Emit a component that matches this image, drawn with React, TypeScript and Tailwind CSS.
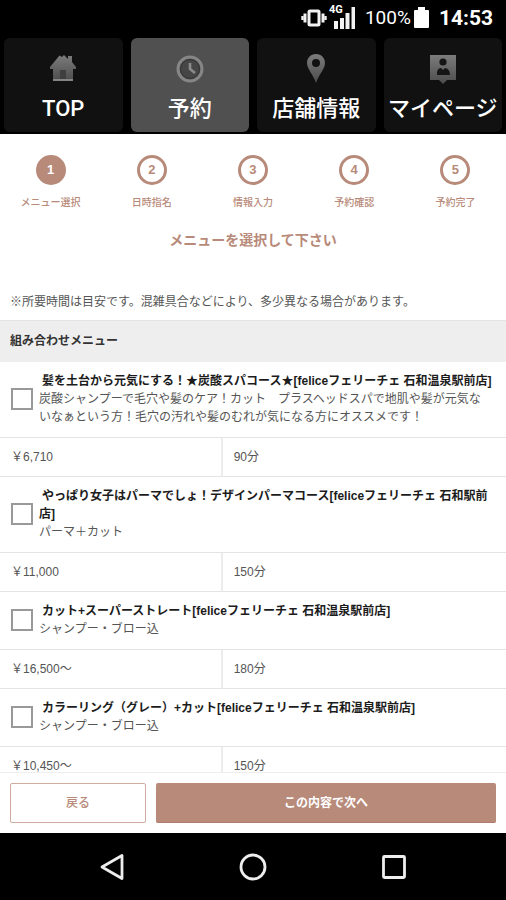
import { useState } from "react";
import type { ReactNode } from "react";

function VibrateIcon() {
  return (
    <svg viewBox="0 0 26 20" className="h-5 w-[26px]" aria-hidden="true">
      <rect x="8" y="3" width="10" height="14" rx="1" fill="none" stroke="#f2f2f2" strokeWidth="3" />
      <path d="M4 5.500v9M22 5.500v9" stroke="#f2f2f2" strokeWidth="3" />
      <path d="M1.500 8v4M24.500 8v4" stroke="#f2f2f2" strokeWidth="2.400" />
    </svg>
  );
}

function SignalIcon() {
  return (
    <svg viewBox="0 0 22 24" className="h-6 w-[22px]" aria-hidden="true">
      <path d="M1 23v-8h4v8zM7 23v-11h4v11zM12.500 23v-16h4v16zM18.500 23V1h3.500v22z" fill="#f2f2f2" />
    </svg>
  );
}

function BatteryIcon() {
  return (
    <svg viewBox="0 0 15 21" className="h-[21px] w-[15px]" aria-hidden="true">
      <path d="M4 0h7v3h3q1 0 1 1v16q0 1-1 1H1q-1 0-1-1V4q0-1 1-1h3z" fill="#fff" />
    </svg>
  );
}

function StatusBar() {
  return (
    <div className="flex h-[38px] flex-none items-center justify-end gap-[10px] pr-[13px] pb-[3px] text-white">
      <div className="flex items-center gap-[6px]">
        <VibrateIcon />
        <div className="relative">
          <SignalIcon />
          <span className="absolute -top-px -left-1 bg-black text-[11px] leading-[10px] font-bold">4G</span>
        </div>
      </div>
      <div className="flex items-center gap-[3px]">
        <span className="text-[19px] leading-6">100%</span>
        <BatteryIcon />
      </div>
      <span className="text-[21px] leading-6 font-bold">14:53</span>
    </div>
  );
}

function IconGradient({ id }: { id: string }) {
  return (
    <defs>
      <linearGradient id={id} x1="0" y1="0" x2="0" y2="1">
        <stop offset="0" stopColor="#7c7c7c" />
        <stop offset="1" stopColor="#4c4c4c" />
      </linearGradient>
    </defs>
  );
}

const homeIcon = (
  <svg viewBox="0 0 28 32" className="h-8 w-7" aria-hidden="true">
    <IconGradient id="home" />
    <path d="M1 15 10.500 3.500 13 5 15 3l4 4V4h4v6l4 5v2h-3v12H4V17H1z" fill="url(#home)" />
    <path d="M11 18h6v9h-6zM13 18h1v9h-1z" fill="#3f3f3f" />
    <path d="M4 28h20" stroke="#999" strokeWidth="1.500" />
  </svg>
);

const clockIcon = (
  <svg viewBox="0 0 28 32" className="h-8 w-7" aria-hidden="true">
    <circle cx="14" cy="17" r="12" fill="#505050" stroke="#868686" strokeWidth="3" />
    <circle cx="14" cy="17" r="9.500" fill="#464646" stroke="#333" />
    <path d="M14 11v6l5 4" fill="none" stroke="#8c8c8c" strokeWidth="2.600" />
  </svg>
);

const pinIcon = (
  <svg viewBox="0 0 28 32" className="h-8 w-7" aria-hidden="true">
    <IconGradient id="pin" />
    <path
      d="M14 2C8.500 2 5 6 5 11c0 6 6 11 9 20 3-9 9-14 9-20 0-5-3.500-9-9-9zm0 5a4 4 0 1 1 0 8 4 4 0 0 1 0-8z"
      fill="url(#pin)"
      fillRule="evenodd"
    />
  </svg>
);

const personIcon = (
  <svg viewBox="0 0 28 32" className="h-8 w-7" aria-hidden="true">
    <IconGradient id="person" />
    <path d="M1 3h26v25H18l-4 4-4-4H1z" fill="url(#person)" />
    <circle cx="14" cy="10" r="3.600" fill="#151515" />
    <path d="M8 23v-3q1-4 4-4l2 2 2-2q5 1 5 7z" fill="#151515" />
  </svg>
);

const tabs: { label: string; icon: ReactNode; active?: boolean }[] = [
  { label: "TOP", icon: homeIcon },
  { label: "予約", icon: clockIcon, active: true },
  { label: "店舗情報", icon: pinIcon },
  { label: "マイページ", icon: personIcon },
];

function TabBar() {
  return (
    <nav className="grid flex-none grid-cols-4 gap-2 px-1 pb-[2px]">
      {tabs.map((tab) => (
        <button
          key={tab.label}
          type="button"
          className={`flex h-[94px] flex-col items-center gap-[11px] rounded-md pt-[14px] text-[22px] leading-7 font-medium whitespace-nowrap text-white ${
            tab.active ? "bg-[#505050]" : "bg-[#111]"
          }`}
        >
          {tab.icon}
          <span>{tab.label}</span>
        </button>
      ))}
    </nav>
  );
}

const steps = ["メニュー選択", "日時指名", "情報入力", "予約確認", "予約完了"];

function Steps() {
  return (
    <ol className="grid grid-cols-5 pt-[21px] text-[#b88a7a]">
      {steps.map((step, i) => (
        <li key={step} className="flex flex-col items-center gap-[10px]">
          <span
            className={`flex size-[30px] items-center justify-center rounded-full border-[3px] border-[#b88a7a] text-[13px] leading-4 font-bold ${
              i === 0 ? "bg-[#b88a7a] text-white" : ""
            }`}
          >
            {i + 1}
          </span>
          <span className="text-[10px] leading-4 font-medium">{step}</span>
        </li>
      ))}
    </ol>
  );
}

const menus = [
  {
    title: "髪を土台から元気にする！★炭酸スパコース★[feliceフェリーチェ 石和温泉駅前店]",
    text: "炭酸シャンプーで毛穴や髪のケア！カット　プラスヘッドスパで地肌や髪が元気ないなぁという方！毛穴の汚れや髪のむれが気になる方にオススメです！",
    price: "￥6,710",
    time: "90分",
  },
  {
    title: "やっぱり女子はパーマでしょ！デザインパーマコース[feliceフェリーチェ 石和駅前店]",
    text: "パーマ＋カット",
    price: "￥11,000",
    time: "150分",
  },
  {
    title: "カット+スーパーストレート[feliceフェリーチェ 石和温泉駅前店]",
    text: "シャンプー・ブロー込",
    price: "￥16,500〜",
    time: "180分",
  },
  {
    title: "カラーリング（グレー）+カット[feliceフェリーチェ 石和温泉駅前店]",
    text: "シャンプー・ブロー込",
    price: "￥10,450〜",
    time: "150分",
  },
];

function MenuTable() {
  const [chosen, setChosen] = useState<number[]>([]);
  const toggle = (i: number) =>
    setChosen((list) => (list.includes(i) ? list.filter((n) => n !== i) : [...list, i]));

  return (
    <table className="w-full table-fixed border-separate border-spacing-0 text-xs leading-[18px] text-[#555]">
      <colgroup>
        <col className="w-[44%]" />
        <col />
      </colgroup>
      {menus.map((menu, i) => (
        <tbody key={menu.title}>
          <tr>
            <td colSpan={2} className="border-b border-[#e4e4e4] p-0">
              <label className="flex items-center gap-[6px] pt-[10px] pr-2 pb-[11px] pl-[11px]">
                <input
                  type="checkbox"
                  checked={chosen.includes(i)}
                  onChange={() => toggle(i)}
                  className="size-[22px] flex-none appearance-none border-2 border-[#999] bg-white checked:bg-[#b88a7a]"
                />
                <span className="min-w-0 flex-1">
                  <b className="block indent-[3px] break-all text-[#1c1c1c]">{menu.title}</b>
                  <span className="block pr-2 break-all">{menu.text}</span>
                </span>
              </label>
            </td>
          </tr>
          <tr>
            <td className="border-r-2 border-b border-r-[#ececec] border-b-[#e4e4e4] py-[10px] pl-[11px]">{menu.price}</td>
            <td className="border-b border-[#e4e4e4] py-[10px] pl-[11px]">{menu.time}</td>
          </tr>
        </tbody>
      ))}
    </table>
  );
}

function SystemNav() {
  return (
    <nav className="flex h-[67px] flex-none items-center justify-center gap-[113px]">
      <button type="button" aria-label="Back">
        <svg viewBox="0 0 28 28" className="size-7" fill="none" stroke="#eee" strokeWidth="2.800" strokeLinejoin="round">
          <path d="M24 2.500v23L4 14z" />
        </svg>
      </button>
      <button type="button" aria-label="Home">
        <svg viewBox="0 0 28 28" className="size-7" fill="none" stroke="#eee" strokeWidth="2.800">
          <circle cx="14" cy="14" r="12" />
        </svg>
      </button>
      <button type="button" aria-label="Recent apps">
        <svg viewBox="0 0 28 28" className="size-7" fill="none" stroke="#eee" strokeWidth="2.800">
          <rect x="3.500" y="3.500" width="21" height="21" rx="1" />
        </svg>
      </button>
    </nav>
  );
}

export default function App() {
  return (
    <div className="flex h-screen flex-col bg-black font-[Roboto,'Noto_Sans_CJK_JP',sans-serif]">
      <StatusBar />
      <TabBar />
      <main className="flex min-h-0 flex-1 flex-col bg-white font-['Liberation_Sans','Noto_Sans_CJK_JP',sans-serif]">
        <div className="min-h-0 flex-1 overflow-hidden">
          <Steps />
          <h1 className="pt-[19px] text-center text-sm leading-5 font-bold text-[#b88a7a]">メニューを選択して下さい</h1>
          <p className="px-[10px] pt-[43px] pb-[9px] text-xs leading-[18px] text-[#555]">
            ※所要時間は目安です。混雑具合などにより、多少異なる場合があります。
          </p>
          <h2 className="border-t border-[#e4e4e4] bg-[#eee] px-[10px] pt-[11px] pb-3 text-xs leading-[18px] font-bold text-[#333]">
            組み合わせメニュー
          </h2>
          <MenuTable />
        </div>
        <div className="flex flex-none gap-[10px] border-t border-[#eee] p-[10px] text-xs leading-[18px]">
          <button
            type="button"
            className="h-10 w-[28%] flex-none rounded-xs border border-[#d0aca0] font-medium text-[#b88a7a]"
          >
            戻る
          </button>
          <button type="button" className="h-10 flex-1 rounded-xs border-b border-[#b07d6c] bg-[#b88a7a] font-bold text-white">
            この内容で次へ
          </button>
        </div>
      </main>
      <SystemNav />
    </div>
  );
}
